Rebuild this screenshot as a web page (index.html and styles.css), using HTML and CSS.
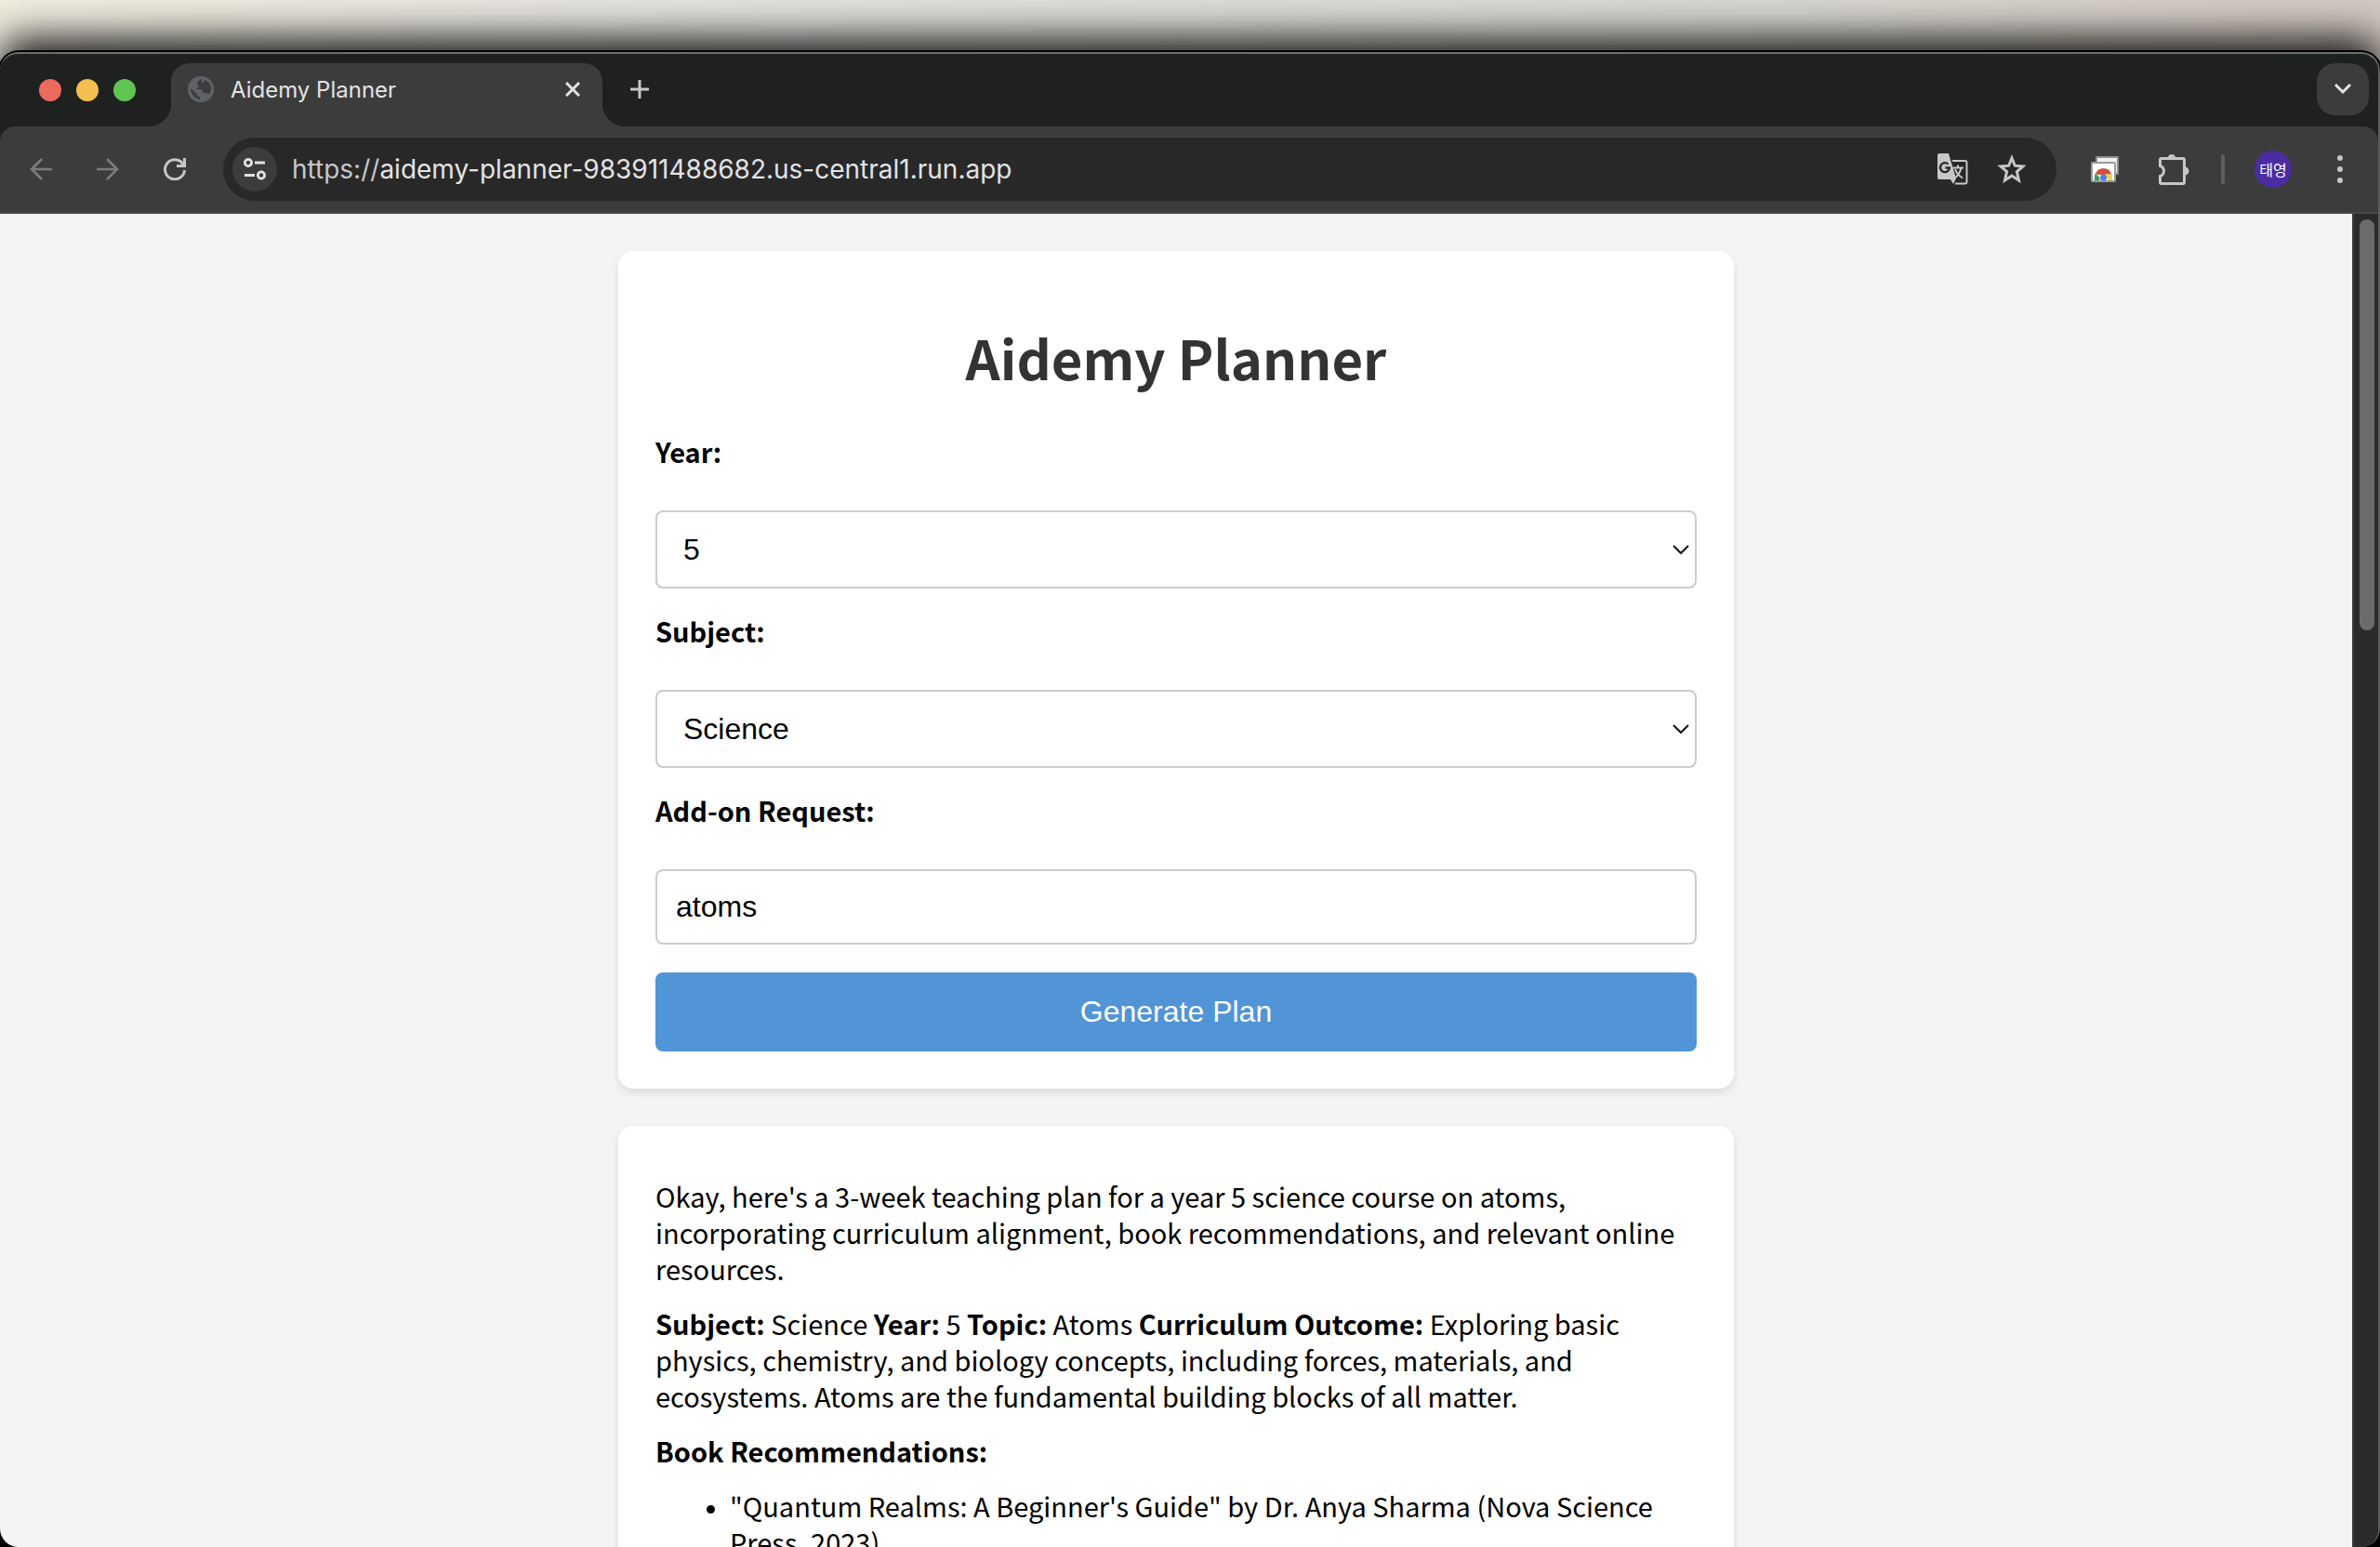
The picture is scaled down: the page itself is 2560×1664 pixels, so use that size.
FILE: index.html
```html
<!DOCTYPE html>
<html lang="en">
<head>
  <meta charset="UTF-8" />
  <meta name="viewport" content="width=device-width, initial-scale=1.0"/>
  <title>Aidemy Planner</title>
  <link rel="stylesheet" href="styles.css">
</head>
<body>
  <div class="window">
    <div class="tab-strip">
      <div class="lights">
        <span class="light red"></span>
        <span class="light yellow"></span>
        <span class="light green"></span>
      </div>
      <div class="tab">
        <svg class="favicon" width="28" height="28" viewBox="0 0 28 28">
          <circle cx="14" cy="14" r="14" fill="#5f6368"/>
          <path d="M15 3C12 4 10 6 10 8C10 10 12 9 12 11C12 13 9 12 9 14H14C16 14 16 16 16 18H19C21 18 22 19 22 20C24 18 25 16 25 13C25 9 22 5 18 4C18 6 17 7 15 7Z" fill="#3c3c3c"/>
          <path d="M3 13C3 19 7 24 13 25V22C10 22 10 20 10 19L3 13Z" fill="#3c3c3c"/>
        </svg>
        <span class="tab-title">Aidemy Planner</span>
        <button class="icon-button" aria-label="Close tab">
          <svg width="16" height="16" viewBox="0 0 16 16" fill="none" stroke="#e3e3e3" stroke-width="3"><path d="M1 1L15 15M15 1L1 15"/></svg>
        </button>
      </div>
      <button class="icon-button new-tab" aria-label="New tab">
        <svg width="20" height="20" viewBox="0 0 20 20" fill="none" stroke="#c7c7c7" stroke-width="3"><path d="M10 0V20M0 10H20"/></svg>
      </button>
      <button class="tab-search" aria-label="Search tabs">
        <svg width="18" height="12" viewBox="0 0 18 12" fill="none" stroke="#e3e3e3" stroke-width="3"><path d="M1 1L9 9L17 1"/></svg>
      </button>
    </div>

    <div class="toolbar">
      <div class="nav">
        <button class="icon-button" aria-label="Back">
          <svg width="24" height="24" viewBox="0 0 24 24" fill="none" stroke="#7c7c7c" stroke-width="2.6"><path d="M24 12H2M13 1L2 12L13 23"/></svg>
        </button>
        <button class="icon-button" aria-label="Forward">
          <svg width="24" height="24" viewBox="0 0 24 24" fill="none" stroke="#7c7c7c" stroke-width="2.6"><path d="M0 12H22M11 1L22 12L11 23"/></svg>
        </button>
        <button class="icon-button" aria-label="Reload">
          <svg width="24" height="24" viewBox="0 0 24 24" fill="none" stroke="#c7c7c7" stroke-width="3"><path d="M22.500 13A10.500 10.500 0 1 1 20 5.500L22 8M22.500 0V8.500H14"/></svg>
        </button>
      </div>
      <div class="address">
        <button class="site-info" aria-label="Site information">
          <svg width="26" height="24" viewBox="0 0 26 24" fill="none" stroke="#e3e3e3" stroke-width="2.800"><circle cx="6" cy="5" r="3.600"/><path d="M13 5H24"/><circle cx="20" cy="18.500" r="3.600"/><path d="M2 18.500H13"/></svg>
        </button>
        <span class="url"><span class="scheme">https://</span>aidemy-planner-983911488682.us-central1.run.app</span>
        <button class="icon-button" aria-label="Translate">
          <svg width="34" height="34" viewBox="0 0 34 34">
            <path d="M17 8H30.500Q32.500 8 32.500 10V30.500Q32.500 32.500 30.500 32.500H20" fill="none" stroke="#c7c7c7" stroke-width="2"/>
            <path d="M3 0H13L21 27L18 33L15 28H3Q1 28 1 26V2Q1 0 3 0Z" fill="#c7c7c7"/>
            <path d="M12.500 11.500A5 5 0 1 0 14 15.500H9.500" fill="none" stroke="#282828" stroke-width="2.400"/>
            <path d="M17.500 15.500H29M23 12.500V15.500M26.500 15.500C25.500 20 23 24 19.500 26.500M20 17C21 20 24 24 28 26.500" fill="none" stroke="#c7c7c7" stroke-width="2"/>
          </svg>
        </button>
        <button class="icon-button star" aria-label="Bookmark this tab">
          <svg width="32" height="32" viewBox="0 0 32 32" fill="none" stroke="#c7c7c7" stroke-width="3"><path d="M16 4L19.300 12.200L28 12.900L21.400 18.600L23.500 28L16 23L8.500 28L10.600 18.600L4 12.900L12.700 12.200Z"/></svg>
        </button>
      </div>
      <div class="actions">
        <button class="icon-button" aria-label="Screenshots extension">
          <svg width="30" height="28" viewBox="0 0 30 28">
            <rect x="6" y="1" width="23" height="18" fill="#f1f1f1" stroke="#8f8f8f" stroke-width="2"/>
            <rect x="1" y="7" width="25" height="20" rx="1" fill="#fff" stroke="#9b9b9b" stroke-width="2"/>
            <path d="M5 19A9 9 0 0 1 22 19L18 20H9Z" fill="#d3503f"/>
            <path d="M5 18L12 26H4V21Z" fill="#3d9b57"/>
            <path d="M16 19H23V26H14Z" fill="#f7cf55"/>
            <path d="M9 26A4.500 4.500 0 0 1 18 26Z" fill="#fff"/>
            <circle cx="13.500" cy="23" r="3.500" fill="#4a80ee"/>
          </svg>
        </button>
        <button class="icon-button" aria-label="Extensions">
          <svg width="34" height="36" viewBox="0 0 34 36">
            <path d="M4 6.500H27Q28.500 6.500 28.500 8V32Q28.500 33.500 27 33.500H4Q2.500 33.500 2.500 32V25.500A5.800 5.800 0 0 0 2.500 14.500V8Q2.500 6.500 4 6.500Z" fill="none" stroke="#c7c7c7" stroke-width="3"/>
            <path d="M11 6A4 4 0 0 1 19 6ZM29 15.500A4.200 4.200 0 0 1 29 24.500Z" fill="#c7c7c7"/>
          </svg>
        </button>
        <span class="divider"></span>
        <button class="avatar">태영</button>
        <button class="icon-button" aria-label="Menu">
          <svg width="6" height="32" viewBox="0 0 6 32" fill="#c7c7c7"><circle cx="3" cy="4" r="3"/><circle cx="3" cy="16" r="3"/><circle cx="3" cy="28" r="3"/></svg>
        </button>
      </div>
    </div>

    <div class="viewport">
      <main class="page">
        <form class="card">
          <h1>Aidemy Planner</h1>

          <label for="year">Year:</label>
          <div class="select-wrap">
            <select id="year">
              <option>5</option>
              <option>6</option>
              <option>7</option>
            </select>
            <svg class="chevron" width="18" height="12" viewBox="0 0 18 12" fill="none" stroke="#111" stroke-width="2"><path d="M1 2L9 10L17 2"/></svg>
          </div>

          <label for="subject">Subject:</label>
          <div class="select-wrap">
            <select id="subject">
              <option>Science</option>
              <option>Mathematics</option>
              <option>English</option>
            </select>
            <svg class="chevron" width="18" height="12" viewBox="0 0 18 12" fill="none" stroke="#111" stroke-width="2"><path d="M1 2L9 10L17 2"/></svg>
          </div>

          <label for="addon">Add-on Request:</label>
          <input type="text" id="addon" value="atoms" />

          <button type="button" class="generate">Generate Plan</button>
        </form>

        <div class="card plan">
          <p>Okay, here's a 3-week teaching plan for a year 5 science course on atoms, incorporating curriculum alignment, book recommendations, and relevant online resources.</p>
          <p><strong>Subject:</strong> Science <strong>Year:</strong> 5 <strong>Topic:</strong> Atoms <strong>Curriculum Outcome:</strong> Exploring basic physics, chemistry, and biology concepts, including forces, materials, and ecosystems. Atoms are the fundamental building blocks of all matter.</p>
          <p><strong>Book Recommendations:</strong></p>
          <ul>
            <li>"Quantum Realms: A Beginner's Guide" by Dr. Anya Sharma (Nova Science Press, 2023)</li>
          </ul>
        </div>
      </main>
      <div class="scrollbar"><div class="thumb"></div></div>
    </div>
  </div>
</body>
</html>
```

FILE: styles.css
```css
:root {
  --frame: #1f2120;
  --toolbar: #3c3c3c;
  --omnibox: #282828;
  --page-bg: #f4f4f4;
  --primary: #5295d6;
}

* {
  box-sizing: border-box;
}

body {
  margin: 0;
  height: 100vh;
  padding-top: 56px;
  overflow: hidden;
  background: linear-gradient(to right, #f1eee0, #e4e3de 30%, #d8d7d0 75%, #d3cac2) top / 100% 100px no-repeat #000;
}

button {
  border: none;
  padding: 0;
  background: none;
  font-family: inherit;
  cursor: pointer;
}

svg {
  display: block;
}

/* browser window */
.window {
  height: 100%;
  display: flex;
  flex-direction: column;
  border-top: 2px solid #6b6f6e;
  border-right: 2px solid #5c5c5c;
  border-radius: 20px;
  overflow: hidden;
  background: var(--frame);
  box-shadow: 0 0 0 2px #000, 0 -14px 44px rgba(0,0,0,0.95);
  font-family: Inter, "Noto Sans CJK KR", sans-serif;
}

.tab-strip {
  flex: none;
  display: flex;
  height: 78px;
  padding: 10px 10px 0 42px;
}

.lights {
  display: flex;
  gap: 16px;
  width: 142px;
  padding-top: 17px;
}

.light {
  width: 24px;
  height: 24px;
  border-radius: 50%;
}

.red { background: #ec6a5e; }
.yellow { background: #f4bf4f; }
.green { background: #61c554; }

.tab {
  position: relative;
  display: flex;
  align-items: center;
  width: 464px;
  padding: 0 24px 12px 18px;
  border-radius: 20px 20px 0 0;
  background: var(--toolbar);
}

.tab::before,
.tab::after {
  content: "";
  position: absolute;
  bottom: 0;
  width: 24px;
  height: 24px;
}

.tab::before {
  right: 100%;
  background: radial-gradient(circle at 0 0, transparent 24px, var(--toolbar) 24px);
}

.tab::after {
  left: 100%;
  background: radial-gradient(circle at 100% 0, transparent 24px, var(--toolbar) 24px);
}

.tab-title {
  flex: 1;
  margin-left: 18px;
  font-size: 24px;
  color: #e3e3e3;
}

.new-tab {
  height: 56px;
  margin-left: 30px;
}

.tab-search {
  display: flex;
  align-items: center;
  justify-content: center;
  width: 56px;
  height: 56px;
  margin-left: auto;
  border-radius: 20px;
  background: var(--toolbar);
}

.toolbar {
  flex: none;
  display: flex;
  align-items: center;
  height: 94px;
  padding: 0 38px 0 32px;
  border-bottom: 2px solid #484848;
  border-radius: 16px 16px 0 0;
  background: var(--toolbar);
}

.nav {
  display: flex;
  gap: 48px;
}

.address {
  flex: 1;
  display: flex;
  align-items: center;
  height: 68px;
  margin: 0 37px 0 40px;
  padding: 0 32px 0 10px;
  border-radius: 34px;
  background: var(--omnibox);
}

.site-info {
  display: flex;
  align-items: center;
  justify-content: center;
  width: 48px;
  height: 48px;
  border-radius: 50%;
  background: var(--toolbar);
}

.url {
  flex: 1;
  margin-left: 16px;
  font-size: 28px;
  color: #e3e3e3;
}

.scheme {
  color: #c7c7c7;
}

.star {
  margin-left: 31px;
}

.actions {
  display: flex;
  align-items: center;
}

.actions > * + * {
  margin-left: 42px;
}

.actions .divider {
  width: 4px;
  height: 32px;
  margin-left: 34px;
  border-radius: 2px;
  background: #5f5f5f;
}

.actions .avatar {
  width: 40px;
  height: 40px;
  margin-left: 32px;
  border-radius: 50%;
  background: #4b2ca3;
  color: white;
  font-size: 16px;
}

.actions .avatar + .icon-button {
  margin-left: 49px;
}

/* page */
.viewport {
  flex: 1;
  min-height: 0;
  display: flex;
}

.page {
  flex: 1;
  padding: 40px;
  overflow: hidden;
  background: var(--page-bg);
  color: #000;
  font-family: "Noto Sans CJK KR", sans-serif;
  font-size: 29px;
  line-height: 39px;
}

.card {
  display: block;
  max-width: 1200px;
  margin: 0 auto 40px;
  padding: 40px;
  border-radius: 16px;
  background: #fff;
  box-shadow: 0 4px 8px rgba(0,0,0,0.1);
}

h1 {
  margin: 36px 0 44px;
  font-size: 58px;
  line-height: 76px;
  font-weight: 600;
  text-align: center;
  color: #333;
}

label {
  display: block;
  margin-bottom: 44px;
  font-weight: 600;
}

select,
input[type="text"],
.generate {
  display: block;
  width: 100%;
  border: 2px solid #ccc;
  border-radius: 8px;
  background: #fff;
  color: #000;
  font-family: "Liberation Sans", sans-serif;
  font-size: 32px;
}

select {
  height: 84px;
  padding: 0 28px;
  appearance: none;
}

.select-wrap {
  position: relative;
  margin-bottom: 26px;
}

.chevron {
  position: absolute;
  right: 8px;
  top: 36px;
  pointer-events: none;
}

input[type="text"] {
  height: 81px;
  padding: 0 20px;
}

.generate {
  height: 85px;
  margin-top: 30px;
  border: none;
  background: var(--primary);
  color: white;
}

.plan {
  padding-top: 36px;
}

.plan p,
.plan ul {
  margin: 20px 0;
}

.plan ul {
  padding-left: 80px;
}

.plan li::marker {
  font-size: 24px;
}

.scrollbar {
  flex: none;
  width: 28px;
  padding: 6px 4px 0 6px;
  border-left: 2px solid #3d3d3d;
  background: #2b2b2b;
}

.thumb {
  height: 442px;
  border-radius: 8px;
  background: #6b6b6b;
}
```
